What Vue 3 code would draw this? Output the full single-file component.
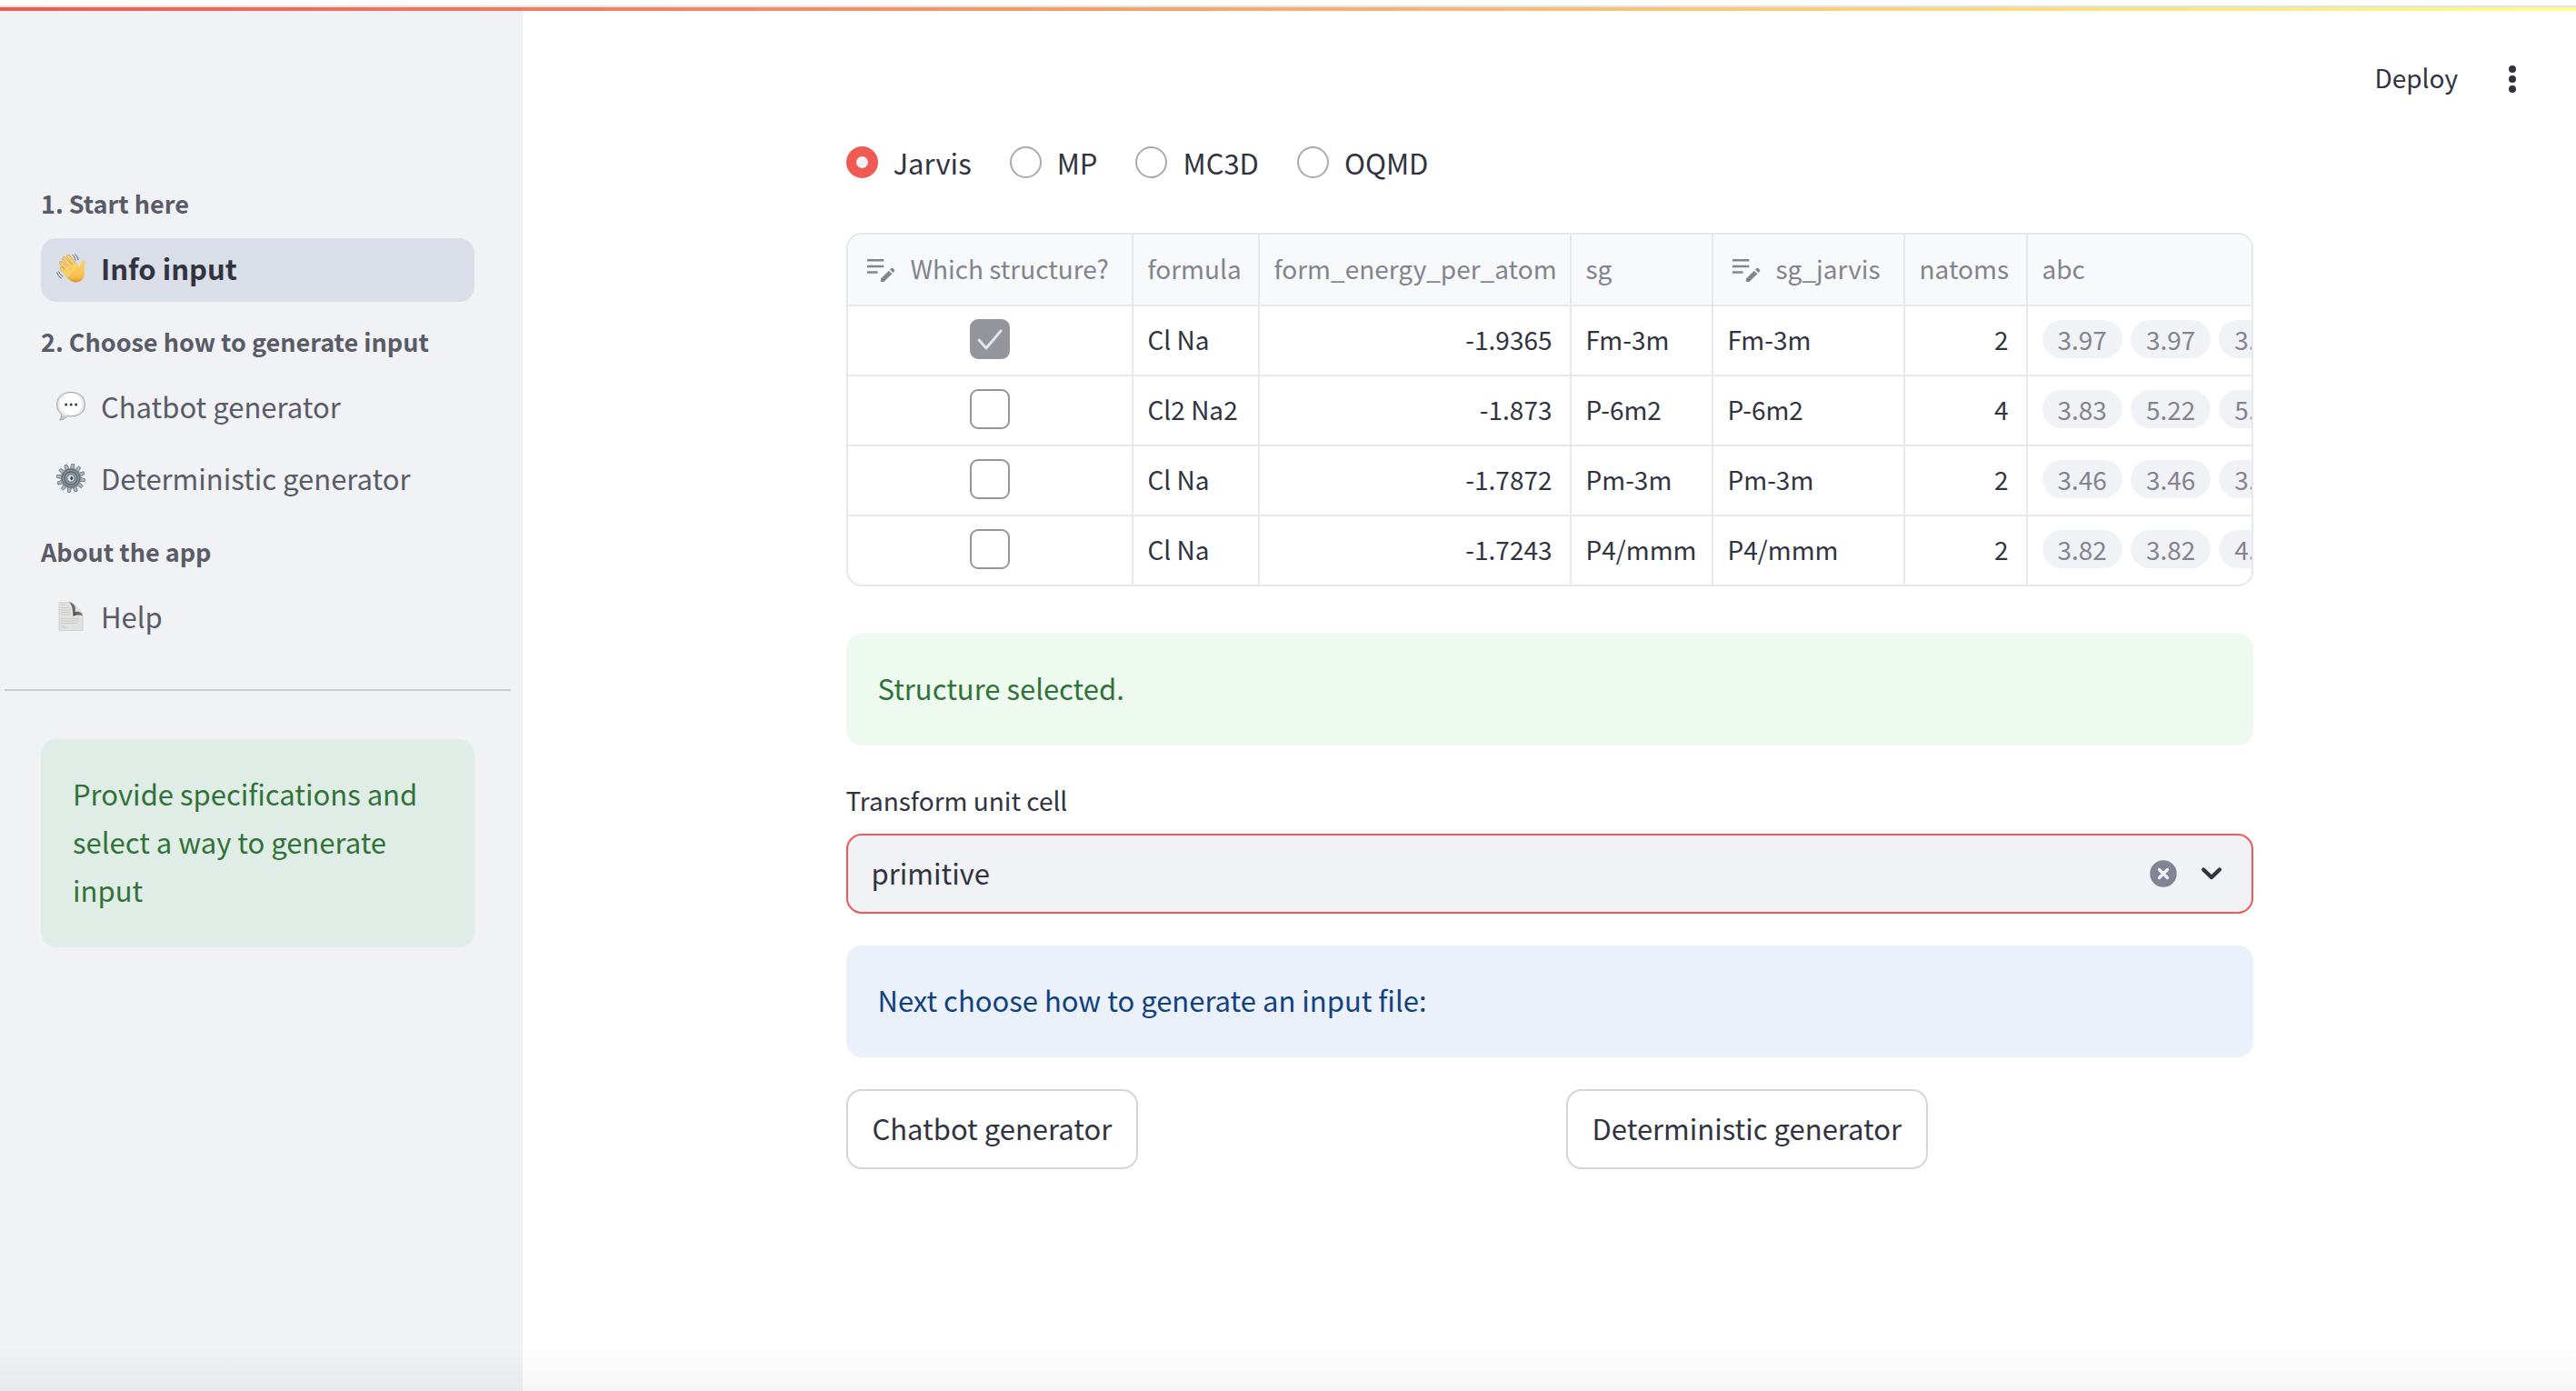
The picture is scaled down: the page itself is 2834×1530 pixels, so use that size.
<template>
  <div class="app">
    <div class="decoration"></div>

    <div class="layout">
      <aside class="sidebar">
        <nav class="nav">
          <section v-for="section in sections" :key="section.title">
            <h2 class="nav-title">{{ section.title }}</h2>
            <ul class="nav-list">
              <li v-for="page in section.pages" :key="page.name">
                <a
                  href="#"
                  class="nav-link"
                  :class="{ active: page.name === currentPage }"
                  @click.prevent="currentPage = page.name"
                >
                  <svg v-if="page.icon === 'wave'" class="nav-icon" viewBox="0 0 32 32">
                    <defs>
                      <linearGradient id="skin" x1="0" y1="0" x2="0" y2="1">
                        <stop offset="0" stop-color="#f9d06a" />
                        <stop offset="0.7" stop-color="#f7c550" />
                        <stop offset="1" stop-color="#dd9032" />
                      </linearGradient>
                    </defs>
                    <path d="M6 16.500l8 7.500M5.200 10l10 10M8.500 5.500l11 11.500M13.300 3l8.500 11" fill="none" stroke="#d9993c" stroke-width="4.200" stroke-linecap="round" />
                    <path d="M11 25.500l-4-5.500 5-6 10-3 4 3.500c0.500-2.500 0.700-4.500 2-6.300 1-1.300 4-1 4 1-1.500 4-1.500 7-1 11.300 0.300 6-3 10.500-9 11-5 0-8-2.500-11-6z" fill="url(#skin)" />
                    <path d="M6 16.500l8 7.500M5.200 10l10 10M8.500 5.500l11 11.500M13.300 3l8.500 11" fill="none" stroke="#f9d06a" stroke-width="3" stroke-linecap="round" />
                    <path d="M18 1.500c1.500 1.500 2.500 3 3 5.500M20.500 0.800c1.800 1.400 3 3.200 3.500 5.700M2.800 20c0.700 2 2 3.500 4 4.500M0.800 21c0.700 2.500 2 4.500 4.400 5.800" fill="none" stroke="#55565c" stroke-width="1" stroke-linecap="round" />
                  </svg>

                  <svg v-else-if="page.icon === 'chat'" class="nav-icon" viewBox="0 0 32 32">
                    <defs>
                      <radialGradient id="bubble" cx="0.5" cy="0.42" r="0.58">
                        <stop offset="0.6" stop-color="#ffffff" />
                        <stop offset="1" stop-color="#c4c4c8" />
                      </radialGradient>
                    </defs>
                    <path d="M16 0.500C7 0.500 0.600 5.500 0.600 13.500c0 5.200 2 9 5 11 0.400 2.800-0.600 4.800-2 6.500 3.600 0 6.400-1.600 8-4.300 12 1.600 19.800-3.500 19.800-12.700C31.400 5.500 25 0.500 16 0.500z" fill="url(#bubble)" stroke="#a4a4a8" stroke-width="1" />
                    <circle cx="10.700" cy="14" r="1.500" fill="#3c3c3e" />
                    <circle cx="16.200" cy="14" r="1.500" fill="#3c3c3e" />
                    <circle cx="21.700" cy="14" r="1.500" fill="#3c3c3e" />
                  </svg>

                  <svg v-else-if="page.icon === 'gear'" class="nav-icon" viewBox="0 0 32 32">
                    <g transform="translate(16 16)">
                      <path
                        v-for="n in 12"
                        :key="n"
                        d="M-2.300 -9L-1.400 -15.600H1.400L2.300 -9z"
                        fill="#a9b7c6"
                        stroke="#5d6670"
                        stroke-width="0.700"
                        :transform="`rotate(${n * 30 + 8})`"
                      />
                      <circle r="11.200" fill="#8d969f" />
                      <circle r="9.800" fill="none" stroke="#62696f" stroke-width="1.200" />
                      <circle r="7" fill="#9ba2a9" stroke="#5a6067" stroke-width="1.300" />
                      <circle r="4.200" fill="#dde6f0" stroke="#565c64" stroke-width="1" />
                      <ellipse cx="0.800" rx="1.500" ry="2.100" fill="#3a3d44" />
                    </g>
                  </svg>

                  <svg v-else class="nav-icon" viewBox="0 0 32 32">
                    <defs>
                      <linearGradient id="curl" x1="1" y1="0" x2="0" y2="1">
                        <stop offset="0" stop-color="#a8a8a8" />
                        <stop offset="1" stop-color="#333333" />
                      </linearGradient>
                    </defs>
                    <path d="M3 0.400h13c4 3 11 8 13 15v16.200H3z" fill="#e2e2e1" stroke="#cacac9" stroke-width="0.800" />
                    <path d="M14 0.400c6 0.600 8 5 6.500 10.600 4-1 8 0.500 8.500 4.500-2-1.200-7-1.500-10.500 0.500-0.300-6-0.500-12-4.500-15.600z" fill="url(#curl)" />
                    <path d="M5 3h5M5 6.500h9M5 9h10M5 11.500h11M5 14h11M5 18.500h20M5 21h20M5 23.500h18M5 26.500h4M5 28.500h7" stroke="#c8c8c7" stroke-width="0.900" />
                  </svg>
                  <span>{{ page.name }}</span>
                </a>
              </li>
            </ul>
          </section>
        </nav>
        <hr class="divider" />
        <div class="alert success sidebar-alert">Provide specifications and select a way to generate input</div>
      </aside>

      <main class="main">
        <header class="toolbar">
          <button type="button" class="deploy-btn">Deploy</button>
          <button type="button" class="menu-btn" aria-label="Menu">
            <svg viewBox="0 0 36 36" fill="currentColor">
              <circle cx="18" cy="7" r="4" />
              <circle cx="18" cy="18" r="4" />
              <circle cx="18" cy="29" r="4" />
            </svg>
          </button>
        </header>

        <div class="content">
          <div class="radio-group" role="radiogroup" aria-label="Database">
            <label v-for="db in databases" :key="db" class="radio-label">
              <input v-model="database" type="radio" name="database" :value="db" class="radio" />
              <span>{{ db }}</span>
            </label>
          </div>

          <div class="table-wrapper">
            <table class="data-table">
              <colgroup>
                <col class="col-select" />
                <col class="col-formula" />
                <col class="col-energy" />
                <col class="col-sg" />
                <col class="col-jarvis" />
                <col class="col-natoms" />
                <col />
              </colgroup>
              <thead>
                <tr>
                  <th v-for="column in columns" :key="column.name">
                    <div class="head-cell">
                      <svg v-if="column.editable" class="edit-icon" viewBox="0 0 24 24" fill="currentColor">
                        <path d="M3 10h11v1.500H3zM3 6h11v1.500H3zM3 14h7v1.500H3zM18.010 12.870l.71-.71a.996.996 0 0 1 1.410 0l.71.71c.39.39.39 1.020 0 1.410l-.71.71zM17.300 13.580l-5.300 5.300V21h2.120l5.300-5.300z" />
                      </svg>
                      <span>{{ column.name }}</span>
                    </div>
                  </th>
                </tr>
              </thead>
              <tbody>
                <tr v-for="(row, index) in rows" :key="index">
                  <td class="select-cell">
                    <input v-model="row.selected" type="checkbox" class="checkbox" :aria-label="`Select ${row.formula} ${row.sg}`" />
                  </td>
                  <td>{{ row.formula }}</td>
                  <td class="number">{{ row.energy }}</td>
                  <td>{{ row.sg }}</td>
                  <td>{{ row.sg }}</td>
                  <td class="number">{{ row.natoms }}</td>
                  <td>
                    <div class="pills">
                      <span v-for="(value, i) in row.abc" :key="i" class="pill">{{ value }}</span>
                    </div>
                  </td>
                </tr>
              </tbody>
            </table>
          </div>

          <div class="alert success">Structure selected.</div>

          <div class="field">
            <label for="unit-cell">Transform unit cell</label>
            <div class="select-box">
              <select id="unit-cell" v-model="unitCell">
                <option value="primitive">primitive</option>
                <option value="conventional">conventional</option>
              </select>
              <button type="button" class="clear-btn" aria-label="Clear value" @click="unitCell = ''">
                <svg viewBox="0 0 30 30">
                  <circle cx="15" cy="15" r="14.700" fill="#808495" />
                  <path d="M10.500 10.500l9 9M19.500 10.500l-9 9" stroke="#f0f2f6" stroke-width="3.400" stroke-linecap="round" />
                </svg>
              </button>
              <svg class="chevron" viewBox="0 0 24 16" fill="none" stroke="#31333f" stroke-width="4.400" stroke-linecap="round" stroke-linejoin="round">
                <path d="M3.200 3.500l8.800 8.500 8.800-8.500" />
              </svg>
            </div>
          </div>

          <div class="alert info">Next choose how to generate an input file:</div>

          <div class="button-row">
            <div><button type="button" class="btn" @click="currentPage = 'Chatbot generator'">Chatbot generator</button></div>
            <div><button type="button" class="btn" @click="currentPage = 'Deterministic generator'">Deterministic generator</button></div>
          </div>
        </div>
      </main>
    </div>
  </div>
</template>

<script setup>
import { ref } from 'vue';

const currentPage = ref('Info input');

const sections = [
  { title: '1. Start here', pages: [{ name: 'Info input', icon: 'wave' }] },
  {
    title: '2. Choose how to generate input',
    pages: [
      { name: 'Chatbot generator', icon: 'chat' },
      { name: 'Deterministic generator', icon: 'gear' },
    ],
  },
  { title: 'About the app', pages: [{ name: 'Help', icon: 'page' }] },
];

const databases = ['Jarvis', 'MP', 'MC3D', 'OQMD'];
const database = ref('Jarvis');

const columns = [
  { name: 'Which structure?', editable: true },
  { name: 'formula' },
  { name: 'form_energy_per_atom' },
  { name: 'sg' },
  { name: 'sg_jarvis', editable: true },
  { name: 'natoms' },
  { name: 'abc' },
];

const rows = ref([
  { selected: true, formula: 'Cl Na', energy: '-1.9365', sg: 'Fm-3m', natoms: 2, abc: ['3.97', '3.97', '3.97'] },
  { selected: false, formula: 'Cl2 Na2', energy: '-1.873', sg: 'P-6m2', natoms: 4, abc: ['3.83', '5.22', '5.22'] },
  { selected: false, formula: 'Cl Na', energy: '-1.7872', sg: 'Pm-3m', natoms: 2, abc: ['3.46', '3.46', '3.46'] },
  { selected: false, formula: 'Cl Na', energy: '-1.7243', sg: 'P4/mmm', natoms: 2, abc: ['3.82', '3.82', '4.82'] },
]);

const unitCell = ref('primitive');
</script>

<style>
body {
  margin: 0;
  background: #ffffff;
}
</style>

<style scoped>
.app {
  min-height: 100vh;
  display: flex;
  flex-direction: column;
  font-family: "Noto Sans CJK SC", "Noto Sans", sans-serif;
  font-size: 31px;
  line-height: 53px;
  color: #31333f;
  background: linear-gradient(to top, rgba(0, 0, 0, 0.04), rgba(0, 0, 0, 0)) bottom / 100% 50px no-repeat;
}

.app *,
.app {
  box-sizing: border-box;
}

button,
select {
  font-family: inherit;
  color: inherit;
  margin: 0;
}

.decoration {
  height: 6px;
  margin-top: 6px;
  border-top: 2px solid #dfe3e4;
  background: linear-gradient(90deg, #ee5a52, #fffd8c);
  background-clip: padding-box;
}

.layout {
  flex: 1;
  display: flex;
}

/* Sidebar */
.sidebar {
  flex: 0 0 575px;
  background: linear-gradient(to top, rgba(0, 0, 0, 0.04), rgba(0, 0, 0, 0)) bottom / 100% 50px no-repeat #f0f2f6;
  padding-top: 168px;
}

.nav {
  padding: 0 53px 0 45px;
}

.nav-title {
  margin: 0;
  padding: 23px 0 17px;
  font-size: 27px;
  font-weight: 700;
  line-height: 42px;
  color: #595b66;
}

.nav-list {
  margin: 0;
  padding: 0;
  list-style: none;
  display: flex;
  flex-direction: column;
  gap: 9px;
}

.nav-link {
  display: flex;
  align-items: center;
  gap: 17px;
  padding: 6px 17px 11px;
  border-radius: 17px;
  color: #595b66;
  text-decoration: none;
}

.nav-link.active {
  background: #dadee9;
  color: #31333f;
  font-weight: 700;
}

.nav-icon {
  width: 32px;
  height: 32px;
}

.divider {
  height: 2px;
  margin: 43px 13px 53px 5px;
  border: none;
  background: #c9cad0;
}

.sidebar-alert {
  margin: 0 53px 0 45px;
}

/* Main */
.main {
  flex: 1;
  min-width: 0;
}

.toolbar {
  display: flex;
  justify-content: flex-end;
  align-items: center;
  gap: 42px;
  height: 140px;
  padding: 9px 52px 0 0;
}

.deploy-btn,
.menu-btn,
.clear-btn {
  border: none;
  background: none;
  padding: 0;
  cursor: pointer;
}

.deploy-btn {
  padding-bottom: 4px;
  font-size: 28px;
  line-height: 42px;
}

.menu-btn svg {
  display: block;
  width: 36px;
  height: 36px;
}

.content {
  max-width: 1548px;
  margin: 0 auto;
  display: flex;
  flex-direction: column;
  gap: 35px;
}

.radio-group {
  display: flex;
  gap: 42px;
  padding-bottom: 16px;
}

.radio-label {
  display: flex;
  align-items: center;
  gap: 17px;
  cursor: pointer;
}

.radio {
  appearance: none;
  width: 35px;
  height: 35px;
  margin: 0;
  border: 2px solid #a9aab0;
  border-radius: 50%;
  background: #ffffff;
}

.radio:checked {
  border: 11px solid #ef5a54;
  background: #f0f2f6;
}

.table-wrapper {
  margin-bottom: 17px;
  border: 2px solid #e7e8ea;
  border-radius: 17px;
  overflow: hidden;
}

.data-table {
  width: 100%;
  table-layout: fixed;
  border-collapse: separate;
  border-spacing: 0;
  font-size: 28px;
  line-height: 42px;
}

.col-select {
  width: 314px;
}

.col-formula {
  width: 139px;
}

.col-energy {
  width: 343px;
}

.col-sg {
  width: 156px;
}

.col-jarvis {
  width: 211px;
}

.col-natoms {
  width: 135px;
}

.data-table th,
.data-table td {
  padding: 0 16px 4px;
  border-right: 2px solid #e7e8ea;
  border-bottom: 2px solid #e7e8ea;
  text-align: left;
  white-space: nowrap;
  overflow: hidden;
}

.data-table th {
  height: 79px;
  background: #f8f9fb;
  font-weight: 400;
  color: #83848e;
}

.data-table td {
  height: 77px;
}

.data-table th:last-child,
.data-table td:last-child {
  border-right: none;
  padding-right: 0;
}

.data-table tbody tr:last-child td {
  height: 75px;
  border-bottom: none;
}

.data-table .number {
  padding-right: 19px;
  text-align: right;
}

.data-table .select-cell {
  text-align: center;
}

.head-cell {
  display: flex;
  align-items: center;
  gap: 13px;
}

.edit-icon {
  width: 40px;
  height: 40px;
}

.checkbox {
  appearance: none;
  display: block;
  width: 44px;
  height: 44px;
  margin: 0 auto;
  border: 2px solid #94959d;
  border-radius: 9px;
  background: #ffffff;
  cursor: pointer;
}

.checkbox:checked {
  background: #94959b url("data:image/svg+xml,%3Csvg xmlns='http://www.w3.org/2000/svg' viewBox='0 0 40 40'%3E%3Cpath d='M8 21l8 9 16-19' fill='none' stroke='%23e4e4e6' stroke-width='3' stroke-linecap='round' stroke-linejoin='round'/%3E%3C/svg%3E") center / 40px 40px no-repeat;
}

.pills {
  display: flex;
  gap: 9px;
}

.pill {
  flex: none;
  padding: 0 17px;
  border-radius: 21px;
  background: #f0f2f6;
  color: #83848e;
}

.alert {
  padding: 33px 35px 37px;
  border-radius: 17px;
}

.success {
  background: rgba(33, 180, 60, 0.08);
  color: #317238;
}

.info {
  background: #eaf1fb;
  color: #12417f;
}

.field label {
  display: block;
  margin-bottom: 12px;
  font-size: 28px;
  line-height: 50px;
}

.select-box {
  display: flex;
  align-items: center;
  height: 88px;
  padding-right: 32px;
  border: 2px solid #ef5a54;
  border-radius: 17px;
  background: #f0f2f6;
}

.select-box select {
  flex: 1;
  height: 100%;
  padding: 0 26px 3px;
  appearance: none;
  border: none;
  outline: none;
  background: none;
  font-size: 31px;
}

.clear-btn {
  margin-right: 26px;
}

.clear-btn svg {
  display: block;
  width: 30px;
  height: 30px;
}

.chevron {
  width: 24px;
  height: 16px;
}

.button-row {
  display: grid;
  grid-template-columns: 1fr 1fr;
  gap: 36px;
}

.btn {
  height: 88px;
  padding: 0 27px 4px;
  border: 2px solid #d5d6d9;
  border-radius: 17px;
  background: #ffffff;
  font-size: 31px;
  cursor: pointer;
}
</style>
